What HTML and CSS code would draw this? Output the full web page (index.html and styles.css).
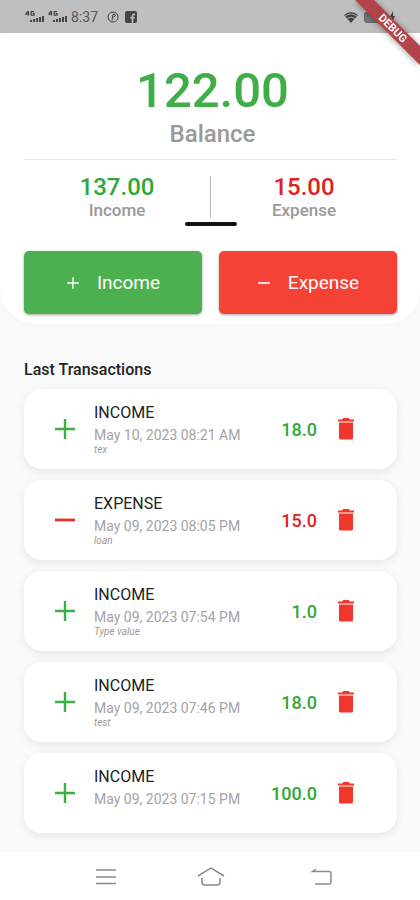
FILE: index.html
```html
<!DOCTYPE html>
<html lang="en">
<head>
<meta charset="utf-8">
<meta name="viewport" content="width=device-width, initial-scale=1">
<title>Balance</title>
<link rel="stylesheet" href="styles.css">
</head>
<body>
<svg class="sprite" aria-hidden="true">
  <symbol id="plus" viewBox="0 0 24 24"><path d="M12 2v20M2 12h20" fill="none" stroke="currentColor" stroke-width="2.4"/></symbol>
  <symbol id="minus" viewBox="0 0 24 24"><path d="M2 12h20" fill="none" stroke="currentColor" stroke-width="2.8"/></symbol>
  <symbol id="trash" viewBox="0 0 16 22"><path d="M1 4.600h14V20q0 1.500-1.500 1.500h-11Q1 21.500 1 20zM0 1.400h4L5.300 0h5.400L12 1.400h4v2.200H0z" fill="currentColor"/></symbol>
  <symbol id="signal" viewBox="0 0 19 14">
    <g fill="currentColor"><path d="M5 10h2v2H5zM8 9h2v3H8zM11 8h2v4h-2zM14 7h2v5h-2zM17 6h2v6h-2z"/></g>
    <path d="M3 1 .7 4.200h3.500M3.400 1v4.500M9 1.700H6.200v3.400h2.900V3.500H7.700" fill="none" stroke="currentColor" stroke-width="1.200"/>
  </symbol>
</svg>

<div class="screen">
  <div class="status">
    <svg class="signal"><use href="#signal"/></svg>
    <svg class="signal"><use href="#signal"/></svg>
    <span class="clock">8:37</span>
    <svg class="round" viewBox="0 0 12 12"><g fill="none" stroke="currentColor"><circle cx="6" cy="6" r="5"/><path d="M5 9.500 6 3.200h1.200q1.500.2.900 1.700Q7.400 6.300 5.600 6.200"/></g></svg>
    <svg class="facebook" viewBox="0 0 12 12"><rect width="12" height="12" rx="2" fill="currentColor"/><path d="M7.500 12V5q0-1.800 2.500-1.600M5.300 6.800h4.300" fill="none" stroke="#bfbfbf" stroke-width="1.600"/></svg>
    <svg class="wifi" viewBox="0 0 14 12"><path d="M0 4q7-6 14 0L7 12z" fill="currentColor"/><path d="M1 5.200q6-4.600 12 0M3.200 7.700q3.800-3 7.600 0" fill="none" stroke="#bfbfbf" stroke-width=".8"/></svg>
    <svg class="battery" viewBox="0 0 32 14"><rect x=".5" y="2.500" width="19" height="10" rx="2" fill="#777" stroke="#666"/><path d="m29 1-3 6h2v5l3-6h-2z" fill="currentColor"/></svg>
  </div>
  <svg class="debug" viewBox="0 0 72 72" role="img" aria-label="DEBUG">
    <path class="ribbon" d="M2-5h19L77 51v19z"/>
    <text class="debug-text" transform="translate(45 28) rotate(45)" text-anchor="middle" y="4">DEBUG</text>
  </svg>

  <header class="summary">
    <div class="balance">
      <strong class="balance-value">122.00</strong>
      <span class="balance-label">Balance</span>
    </div>
    <div class="totals">
      <div class="total income"><strong>137.00</strong><span>Income</span></div>
      <div class="divider"></div>
      <div class="total expense"><strong>15.00</strong><span>Expense</span></div>
      <div class="handle"></div>
    </div>
    <div class="actions">
      <button class="action add" type="button"><svg><use href="#plus"/></svg>Income</button>
      <button class="action spend" type="button"><svg><use href="#minus"/></svg>Expense</button>
    </div>
  </header>

  <main class="history">
    <h2>Last Transactions</h2>
    <ul class="list">
      <li class="card income"><svg class="kind"><use href="#plus"/></svg><div class="info"><h3>INCOME</h3><time>May 10, 2023 08:21 AM</time><em>tex</em></div><strong>18.0</strong><button type="button" aria-label="Delete"><svg><use href="#trash"/></svg></button></li>
      <li class="card expense"><svg class="kind"><use href="#minus"/></svg><div class="info"><h3>EXPENSE</h3><time>May 09, 2023 08:05 PM</time><em>loan</em></div><strong>15.0</strong><button type="button" aria-label="Delete"><svg><use href="#trash"/></svg></button></li>
      <li class="card income"><svg class="kind"><use href="#plus"/></svg><div class="info"><h3>INCOME</h3><time>May 09, 2023 07:54 PM</time><em>Type value</em></div><strong>1.0</strong><button type="button" aria-label="Delete"><svg><use href="#trash"/></svg></button></li>
      <li class="card income"><svg class="kind"><use href="#plus"/></svg><div class="info"><h3>INCOME</h3><time>May 09, 2023 07:46 PM</time><em>test</em></div><strong>18.0</strong><button type="button" aria-label="Delete"><svg><use href="#trash"/></svg></button></li>
      <li class="card income"><svg class="kind"><use href="#plus"/></svg><div class="info"><h3>INCOME</h3><time>May 09, 2023 07:15 PM</time><em></em></div><strong>100.0</strong><button type="button" aria-label="Delete"><svg><use href="#trash"/></svg></button></li>
    </ul>
  </main>

  <nav class="system">
    <button type="button" aria-label="Recent apps"><svg viewBox="0 0 28 20"><path d="M4 3h20M4 10h20M4 16.500h20"/></svg></button>
    <button type="button" aria-label="Home"><svg viewBox="0 0 28 20"><path d="M0 9 11.500 1.800q1.500-.9 3 0L26 9M4 11v4q0 3 3 3h12q3 0 3-3v-4"/></svg></button>
    <button type="button" aria-label="Back"><svg viewBox="0 0 28 20"><path d="M12 2 8.500 4.500H25q2 0 2 2V15q0 2-2 2H11"/></svg></button>
  </nav>
</div>
</body>
</html>
```
FILE: styles.css
```css
* { box-sizing: border-box; }

body {
  margin: 0;
  background: #fafafa;
  font-family: Roboto, "Liberation Sans", sans-serif;
}

h2, h3, ul { margin: 0; padding: 0; }
button { border: 0; padding: 0; background: none; font: inherit; cursor: pointer; }
svg { display: block; }
.sprite { position: absolute; width: 0; height: 0; }

.screen {
  position: relative;
  display: flex;
  flex-direction: column;
  min-height: 100vh;
  overflow: hidden;
}

.status {
  display: flex;
  align-items: center;
  height: 33px;
  padding: 0 24px 0 25px;
  background: #bfbfbf;
  color: #444;
}
.signal { width: 19px; height: 14px; margin-right: 4px; }
.clock { font-size: 14px; color: #555; }
.round { width: 12px; height: 12px; margin-left: 9px; }
.facebook { width: 12px; height: 12px; margin-left: 6px; }
.wifi { width: 14px; height: 12px; margin-left: auto; }
.battery { width: 32px; height: 14px; margin-left: 6px; }

.debug {
  position: absolute;
  top: 0;
  right: 0;
  width: 72px;
  height: 72px;
  filter: drop-shadow(0 1px 3px rgba(0, 0, 0, 0.4));
}
.ribbon { fill: #b3434a; }
.debug-text { fill: #fff; font-size: 11px; font-weight: 700; }

.summary {
  padding: 28px 23px 10px 24px;
  border-radius: 0 0 36px 36px;
  background: #fff;
  box-shadow: 0 0 12px rgba(0, 0, 0, 0.02);
}

.balance {
  display: flex;
  flex-direction: column;
  align-items: center;
  padding-bottom: 11px;
  padding-left: 4px;
  border-bottom: 1px solid #e6e6e6;
}
.balance-value { color: #3fae49; font-size: 49px; font-weight: 500; line-height: 60px; }
.balance-label { color: #999; font-size: 24px; font-weight: 500; line-height: 27px; }

.totals {
  position: relative;
  display: flex;
  padding-top: 14px;
}
.total {
  flex: 1;
  display: flex;
  flex-direction: column;
  align-items: center;
}
.total strong { font-size: 24px; font-weight: 500; line-height: 26px; }
.total span { color: #999; font-size: 17px; font-weight: 500; line-height: 20px; }
.divider { width: 1px; height: 42px; margin-top: 2px; background: #bbb; }
.handle {
  position: absolute;
  bottom: -6px;
  left: 50%;
  width: 52px;
  height: 4px;
  margin-left: -26px;
  border-radius: 2px;
  background: #111;
}
.income strong { color: #30a836; }
.expense strong { color: #e0221c; }

.actions { display: flex; gap: 17px; margin-top: 31px; }
.action {
  flex: 1;
  display: flex;
  align-items: center;
  justify-content: center;
  gap: 17px;
  height: 63px;
  border-radius: 5px;
  box-shadow: 0 1px 3px rgba(0, 0, 0, 0.35);
  color: #fff;
  font-size: 19px;
}
.action svg { width: 14px; height: 14px; }
.add { background: #4caf50; }
.spend { background: #f44336; }

.history { flex: 1; padding: 36px 23px 19px 24px; }
.history h2 { color: #222; font-size: 16px; font-weight: 500; line-height: 20px; }
.list {
  display: flex;
  flex-direction: column;
  gap: 11px;
  margin-top: 9px;
  list-style: none;
}
.card {
  display: flex;
  align-items: center;
  height: 80px;
  padding: 0 43px 0 29px;
  border-radius: 18px;
  background: #fff;
  box-shadow: 0 3px 10px rgba(0, 0, 0, 0.08);
}
.kind { width: 24px; height: 24px; color: #3bb044; }
.expense .kind { color: #e8352c; }
.info {
  flex: 1;
  display: flex;
  flex-direction: column;
  padding: 0 0 2px 17px;
}
.info h3 { color: #222; font-size: 16px; font-weight: 400; line-height: 24px; }
.info time { color: #a3a3a3; font-size: 14px; line-height: 20px; }
.info em { height: 10px; color: #999; font-size: 10px; line-height: 10px; }
.card strong { font-size: 18px; font-weight: 500; }
.card button { margin-left: 21px; color: #f0372b; }
.card button svg { width: 16px; height: 22px; }

.system {
  display: flex;
  justify-content: space-between;
  padding: 15px 88px 15px 92px;
  background: #fff;
}
.system svg {
  width: 28px;
  height: 20px;
  fill: none;
  stroke: #8a8a8a;
  stroke-width: 1.5;
}
```
